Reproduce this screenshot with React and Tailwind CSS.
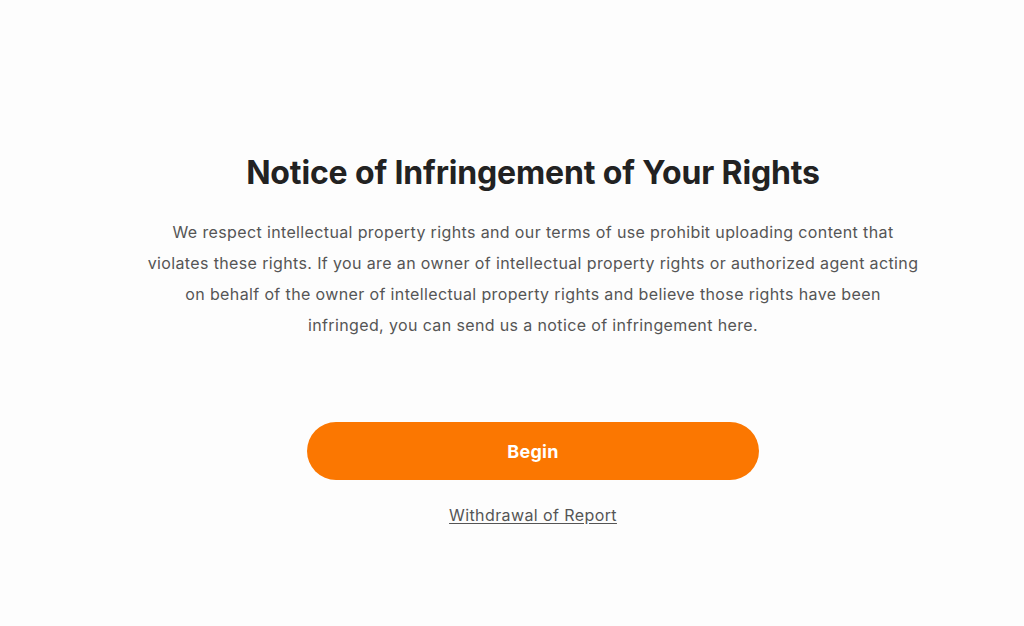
export default function App() {
  return (
    <div className="min-h-[626px] w-full bg-[#fdfdfd] pl-[42px] flex flex-col items-center" style={{ fontFamily: "Inter, 'Liberation Sans', sans-serif" }}>
      <h1 className="mt-[153px] text-[32px] leading-[40px] font-bold text-[#222] tracking-[-0.15px]">Notice of Infringement of Your Rights</h1>
      <p className="mt-[24px] w-[773px] text-center text-[16px] leading-[31px] text-[#555] tracking-[0.37px]">
        We respect intellectual property rights and our terms of use prohibit uploading content that violates these rights. If you are an owner of intellectual property rights or authorized agent acting on behalf of the owner of intellectual property rights and believe those rights have been infringed, you can send us a notice of infringement here.
      </p>
      <button className="mt-[81px] w-[452px] h-[58px] rounded-full bg-[#fb7701] text-white text-[18px] font-bold tracking-[0.3px]">Begin</button>
      <a href="#" className="mt-[23px] text-[16px] leading-[24px] text-[#555] underline underline-offset-2 tracking-[0.4px]">Withdrawal of Report</a>
    </div>
  );
}
